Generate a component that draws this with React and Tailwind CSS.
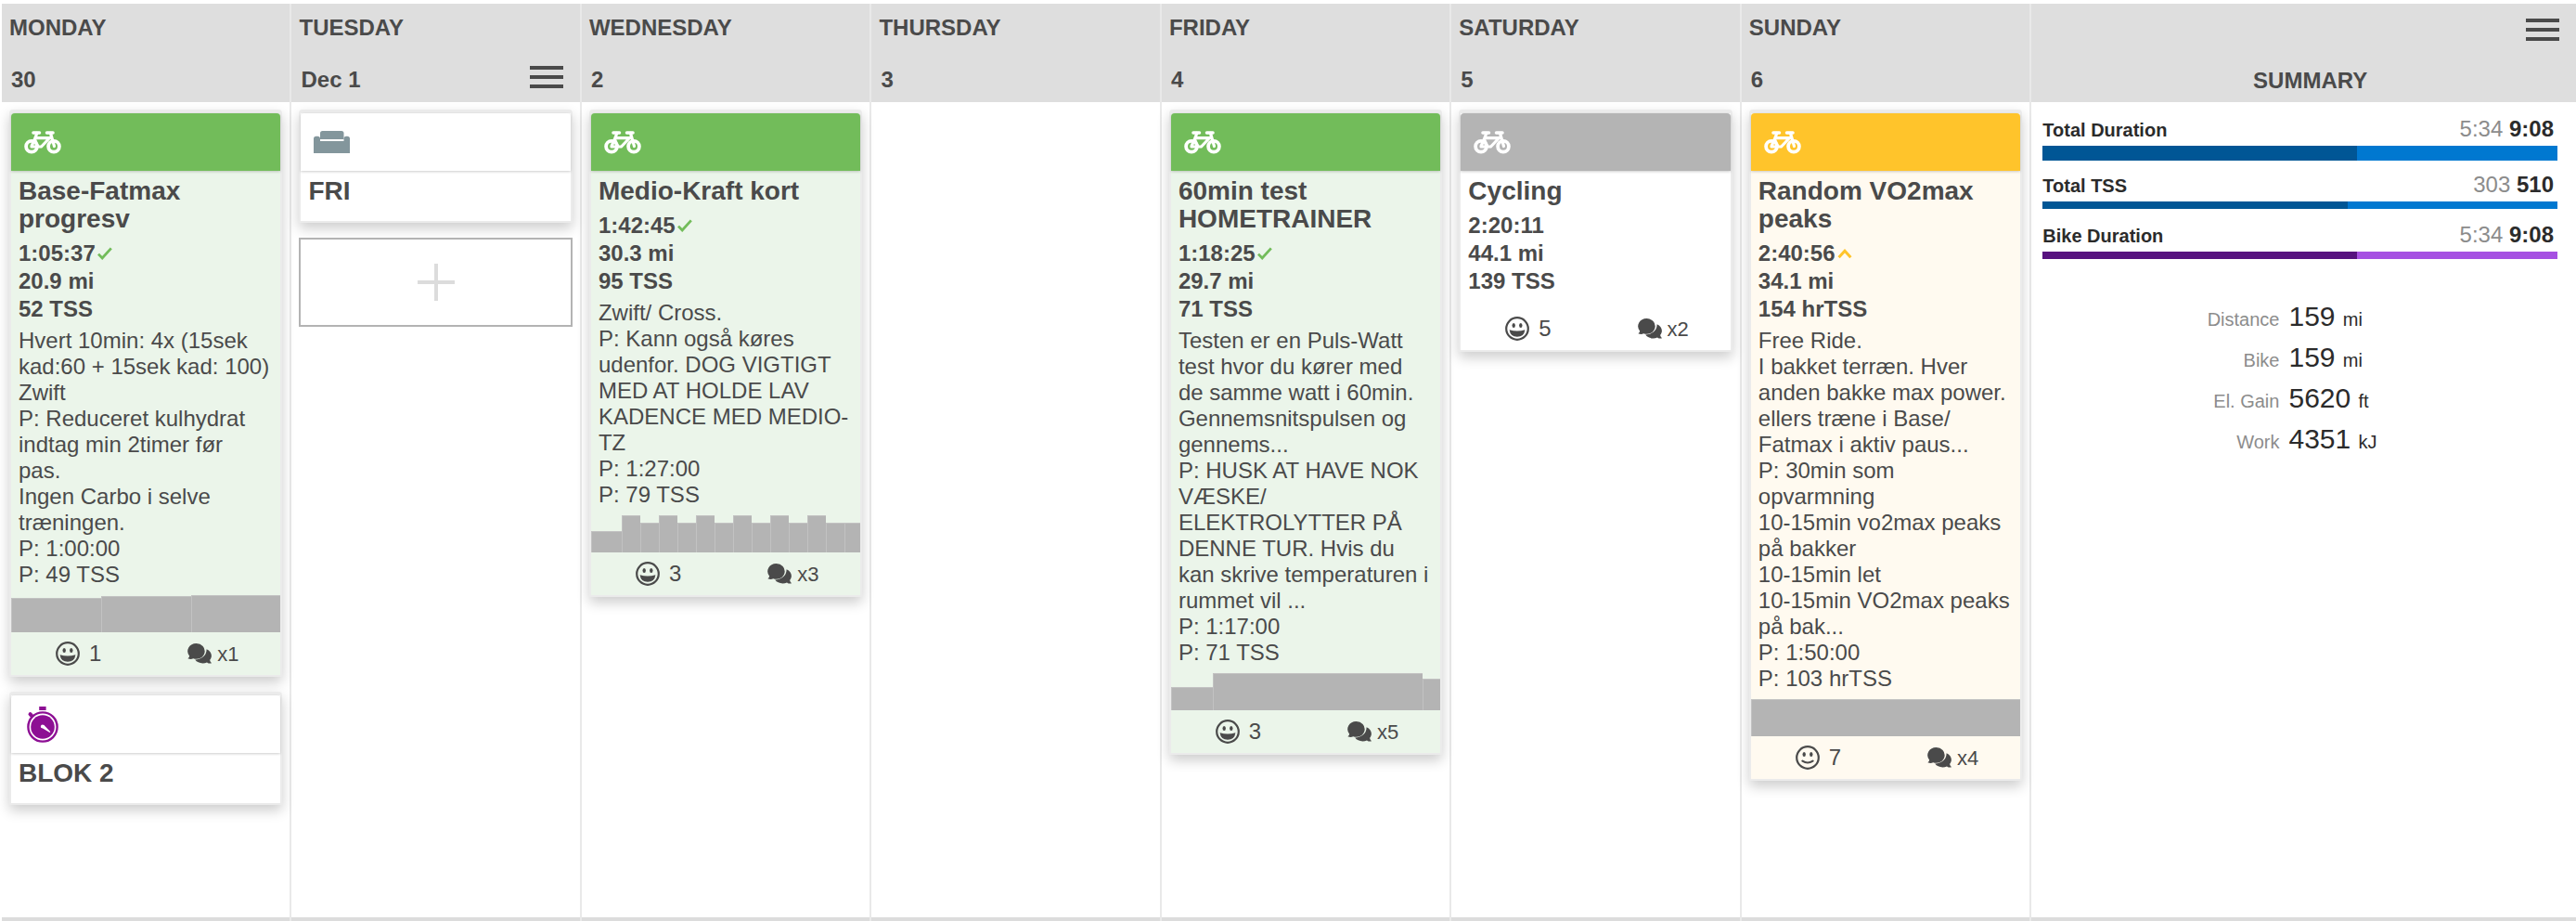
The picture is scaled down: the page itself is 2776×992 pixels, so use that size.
import React from "react";

const DESC_MON = `Hvert 10min: 4x (15sek kad:60 + 15sek kad: 100)
Zwift
P: Reduceret kulhydrat indtag min 2timer før
pas.
Ingen Carbo i selve træningen.
P: 1:00:00
P: 49 TSS`;

const DESC_WED = `Zwift/ Cross.
P: Kann også køres udenfor. DOG VIGTIGT MED AT HOLDE LAV KADENCE MED MEDIO-TZ
P: 1:27:00
P: 79 TSS`;

const DESC_FRI = `Testen er en Puls-Watt test hvor du kører med de samme watt i 60min. Gennemsnitspulsen og gennems...
P: HUSK AT HAVE NOK VÆSKE/
ELEKTROLYTTER PÅ DENNE TUR. Hvis du kan skrive temperaturen i rummet vil ...
P: 1:17:00
P: 71 TSS`;

const DESC_SUN = `Free Ride.
I bakket terræn. Hver anden bakke max power. ellers træne i Base/
Fatmax i aktiv paus...
P: 30min som opvarmning
10-15min vo2max peaks på bakker
10-15min let
10-15min VO2max peaks på bak...
P: 1:50:00
P: 103 hrTSS`;

// [width, height] of each interval block
const INTERVALS_WED = [
  [82, 23], [49, 40], [49, 32], [49, 40], [49, 32], [49, 40], [49, 32],
  [49, 40], [49, 32], [49, 40], [49, 32], [49, 40], [49, 32], [41, 32],
];

const DAYS = [
  {
    name: "MONDAY",
    date: "30",
    items: [
      {
        kind: "bike", tone: "green", title: "Base-Fatmax progresv",
        stats: ["1:05:37", "20.9 mi", "52 TSS"], mark: "check", desc: DESC_MON,
        graph: [[1, 37], [1, 39], [1, 40]], feel: 1, comments: 1,
      },
      { kind: "timer", tone: "plain", title: "BLOK 2" },
    ],
  },
  {
    name: "TUESDAY",
    date: "Dec 1",
    today: true,
    items: [{ kind: "sofa", tone: "plain", title: "FRI" }],
  },
  {
    name: "WEDNESDAY",
    date: "2",
    items: [
      {
        kind: "bike", tone: "green", title: "Medio-Kraft kort",
        stats: ["1:42:45", "30.3 mi", "95 TSS"], mark: "check", desc: DESC_WED,
        graph: INTERVALS_WED, feel: 3, comments: 3,
      },
    ],
  },
  { name: "THURSDAY", date: "3", items: [] },
  {
    name: "FRIDAY",
    date: "4",
    items: [
      {
        kind: "bike", tone: "green", title: "60min test HOMETRAINER",
        stats: ["1:18:25", "29.7 mi", "71 TSS"], mark: "check", desc: DESC_FRI,
        graph: [[110, 25], [555, 40], [45, 34]], feel: 3, comments: 5,
      },
    ],
  },
  {
    name: "SATURDAY",
    date: "5",
    items: [
      {
        kind: "bike", tone: "gray", title: "Cycling",
        stats: ["2:20:11", "44.1 mi", "139 TSS"], feel: 5, comments: 2,
      },
    ],
  },
  {
    name: "SUNDAY",
    date: "6",
    items: [
      {
        kind: "bike", tone: "yellow", title: "Random VO2max peaks",
        stats: ["2:40:56", "34.1 mi", "154 hrTSS"], mark: "over", desc: DESC_SUN,
        graph: [[1, 40]], feel: 7, calm: true, comments: 4,
      },
    ],
  },
];

const TOTALS = [
  { label: "Total Duration", done: "5:34", total: "9:08", pct: 61, bar: "h-4 mb-3 bg-[#0078d0]", fill: "bg-[#005695]" },
  { label: "Total TSS", done: "303", total: "510", pct: 59.2, bar: "h-2 mb-3.5 bg-[#0078d0]", fill: "bg-[#005695]" },
  { label: "Bike Duration", done: "5:34", total: "9:08", pct: 61, bar: "h-2 bg-[#a650e2]", fill: "bg-[#57127f]" },
];

const FIGURES = [
  ["Distance", "159", "mi"],
  ["Bike", "159", "mi"],
  ["El. Gain", "5620", "ft"],
  ["Work", "4351", "kJ"],
];

const TONES = {
  green: { head: "bg-[#72bc5a]", body: "bg-[#ebf5ea]" },
  gray: { head: "bg-[#b4b4b4]", body: "bg-white" },
  yellow: { head: "bg-[#ffc42b]", body: "bg-[#fffaf0]" },
  plain: { head: "bg-white", body: "bg-white" },
};

const BikeIcon = () => (
  <svg width="40" height="25" viewBox="0 0 40 25" fill="none" stroke="#fff">
    <circle cx="8" cy="16.8" r="5.9" strokeWidth="3.8" />
    <circle cx="32" cy="16.8" r="5.9" strokeWidth="3.8" />
    <path d="M10 2h6.5M24.5 2h6.5" strokeWidth="3.6" strokeLinecap="round" />
    <path d="M13.8 2.5L11.8 8L8 16.5M11.8 7.6H28M27.5 7.5L18.5 17H8M28.5 2.5L32.5 16.5" strokeWidth="3.2" strokeLinejoin="round" strokeLinecap="round" />
    <path d="M12 9L15.5 17" strokeWidth="2" />
  </svg>
);

const SofaIcon = () => (
  <svg width="40" height="24" viewBox="0 0 40 24" fill="#83969c">
    <path d="M7 9V2.5Q7 0 9.5 0H30Q32.5 0 32.5 2.5V9Z" />
    <path d="M0 24V8.5Q0 5.8 2.8 5.8H4.2Q7 5.8 7 8.5V11H32.5V8.5Q32.5 5.8 35.2 5.8H36.2Q39 5.8 39 8.5V24Z" />
  </svg>
);

const TimerIcon = () => (
  <svg width="34" height="39" viewBox="0 0 34 39">
    <rect x="13.2" y="0" width="7.4" height="4" fill="#8d0f94" />
    <path d="M3.5 8.2L6.6 11.6" stroke="#8d0f94" strokeWidth="4" strokeLinecap="round" />
    <circle cx="17" cy="22" r="15.6" fill="#fff" stroke="#8d0f94" strokeWidth="2.4" />
    <circle cx="17" cy="22" r="12.8" fill="#8d0f94" />
    <path d="M15 22.2L18.2 19.8L25.4 27.2L24.6 28Z" fill="#fff" />
    <circle cx="16.8" cy="21.4" r="1.9" fill="#fff" />
  </svg>
);

const FeelIcon = ({ calm }) => (
  <svg width="26" height="26" viewBox="0 0 26 26" fill="none" stroke="#4a4a4a">
    <circle cx="13" cy="13" r="11.8" strokeWidth="2.2" />
    <ellipse cx="9.2" cy="9.6" rx="1.7" ry="2.5" fill="#4a4a4a" stroke="none" />
    <ellipse cx="16.8" cy="9.6" rx="1.7" ry="2.5" fill="#4a4a4a" stroke="none" />
    {calm ? (
      <path d="M7.4 16.6Q13 20.4 18.6 16.6" strokeWidth="2.2" strokeLinecap="round" />
    ) : (
      <path d="M4.6 14.2Q13 17 21.4 14.2Q20.4 21.8 13 21.8Q5.6 21.8 4.6 14.2Z" fill="#4a4a4a" stroke="none" />
    )}
  </svg>
);

const CommentsIcon = () => (
  <svg width="26" height="22" viewBox="0 0 26 22" fill="#4a4a4a">
    <path d="M9.6 0a9.3 8.4 0 1 1-3.4 16.3Q3.6 17.6 0.4 16.2Q2.4 14.8 2.1 13.4A9.3 8.4 0 0 1 9.6 0Z" />
    <path d="M20.6 6.2C20.8 13 15.6 17 8.2 17.6C10.6 21.2 16.8 22.6 21 20.4C22.6 21.6 24.6 21.9 26 21.2C24.8 20.2 24.2 19 24.2 17.8C27.4 14.2 26 8.2 20.6 6.2Z" />
  </svg>
);

const CheckMark = () => (
  <svg width="16" height="14" viewBox="0 0 16 14" fill="none" stroke="#72bc5a" strokeWidth="2.8">
    <path d="M1 7.6L5.2 12L14.8 1.4" />
  </svg>
);

const OverMark = () => (
  <svg width="16" height="14" viewBox="0 0 16 14" fill="none" stroke="#ffc42b" strokeWidth="3">
    <path d="M1.6 11.2L8 4.2L14.4 11.2" />
  </svg>
);

const MenuButton = ({ label }) => (
  <button aria-label={label} className="flex h-6 w-9 flex-col justify-between">
    <span className="h-1 w-full bg-[#4a4a4a]" />
    <span className="h-1 w-full bg-[#4a4a4a]" />
    <span className="h-1 w-full bg-[#4a4a4a]" />
  </button>
);

const ICONS = { bike: BikeIcon, sofa: SofaIcon, timer: TimerIcon };

const Card = ({ item }) => {
  const tone = TONES[item.tone];
  const Icon = ICONS[item.kind];
  return (
    <article className={`rounded-t border-2 border-t-4 border-[#ebebeb] shadow-[0_6px_14px_rgba(0,0,0,0.2)] ${tone.body}`}>
      <div className={`flex h-[62px] items-center rounded-t-sm pl-3 shadow-[0_1px_3px_rgba(0,0,0,0.2)] ${tone.head}`}>
        <span className="flex w-11 justify-center"><Icon /></span>
      </div>
      <div className="px-2 pt-[7px]">
        <h3 className="text-[28px] leading-[30px] font-bold">{item.title}</h3>
        {item.stats && (
          <ul className="mt-[7px] leading-[30px] font-bold">
            {item.stats.map((s, i) => (
              <li key={s} className="flex items-center gap-0.5">
                {s}
                {i === 0 && item.mark === "check" && <CheckMark />}
                {i === 0 && item.mark === "over" && <OverMark />}
              </li>
            ))}
          </ul>
        )}
        {item.desc && <p className="mt-[5px] leading-7 whitespace-pre-line">{item.desc}</p>}
      </div>
      {item.graph && (
        <div className="mt-2 flex h-10 items-end">
          {item.graph.map(([w, h], i) => (
            <div key={i} className="basis-0 border-t border-l border-[#c2c2c2] bg-[#b4b4b4]" style={{ flexGrow: w, height: h }} />
          ))}
        </div>
      )}
      {item.feel ? (
        <div className={`grid h-[46px] grid-cols-2 items-center ${item.graph ? "" : "mt-[13px]"}`}>
          <span className="flex items-center justify-center gap-2.5">
            <FeelIcon calm={item.calm} />
            {item.feel}
          </span>
          <span className="flex items-center justify-center gap-1.5 text-[22px]">
            <CommentsIcon />x{item.comments}
          </span>
        </div>
      ) : (
        <div className="h-[17px]" />
      )}
    </article>
  );
};

const Day = ({ day }) => (
  <section className="flex flex-col border-r-2 border-[#e9e9e9]">
    <header className="h-[106px] bg-[#dedede] pt-[11px] pr-[18px] pl-2 leading-[30px] font-bold">
      <h2>{day.name}</h2>
      <div className="mt-[26px] flex items-start justify-between pl-0.5">
        <span>{day.date}</span>
        {day.today && <MenuButton label="Day menu" />}
      </div>
    </header>
    <div className="flex grow flex-col gap-4 p-2">
      {day.items.map((item) => (
        <Card key={item.title} item={item} />
      ))}
      {day.today && (
        <button aria-label="Add workout" className="flex h-24 items-center justify-center border-2 border-[#b3b3b3] bg-white">
          <svg width="40" height="40" viewBox="0 0 40 40" stroke="#dcdcdc" strokeWidth="4">
            <path d="M20 0V40M0 20H40" />
          </svg>
        </button>
      )}
    </div>
    <div className="h-1 bg-[#dcdcdc]" />
  </section>
);

const Summary = () => (
  <section className="flex flex-col text-[#2b2b2b]">
    <header className="h-[106px] bg-[#dedede] pt-4 pr-[18px] text-[#4a4a4a]">
      <div className="flex justify-end">
        <MenuButton label="Week menu" />
      </div>
      <h2 className="mt-7 pl-8 text-center leading-[30px] font-bold">SUMMARY</h2>
    </header>
    <div className="grow pt-[15px] pr-5 pl-3">
      {TOTALS.map((t) => (
        <div key={t.label}>
          <div className="mb-1 flex items-baseline justify-between pr-1 leading-7">
            <span className="text-[20px] leading-none font-bold">{t.label}</span>
            <span>
              <span className="text-[#8c8c8c]">{t.done}</span> <b>{t.total}</b>
            </span>
          </div>
          <div className={t.bar}>
            <div className={`h-full ${t.fill}`} style={{ width: `${t.pct}%` }} />
          </div>
        </div>
      ))}
      <dl className="mt-10">
        {FIGURES.map(([label, value, unit]) => (
          <div key={label} className="flex items-baseline">
            <dt className="w-[46%] text-right text-[20px] leading-none text-[#8c8c8c]">{label}</dt>
            <dd className="pl-2.5 text-[30px] leading-[44px]">
              {value} <span className="text-[20px] leading-none">{unit}</span>
            </dd>
          </div>
        ))}
      </dl>
    </div>
    <div className="h-1 bg-[#dcdcdc]" />
  </section>
);

export default function App() {
  return (
    <main className="grid min-h-screen grid-cols-[repeat(7,minmax(0,1fr))_21.15%] bg-white pt-1 pl-0.5 font-['Liberation_Sans',Arial,sans-serif] text-[24px] text-[#4a4a4a]">
      {DAYS.map((day) => (
        <Day key={day.name} day={day} />
      ))}
      <Summary />
    </main>
  );
}
